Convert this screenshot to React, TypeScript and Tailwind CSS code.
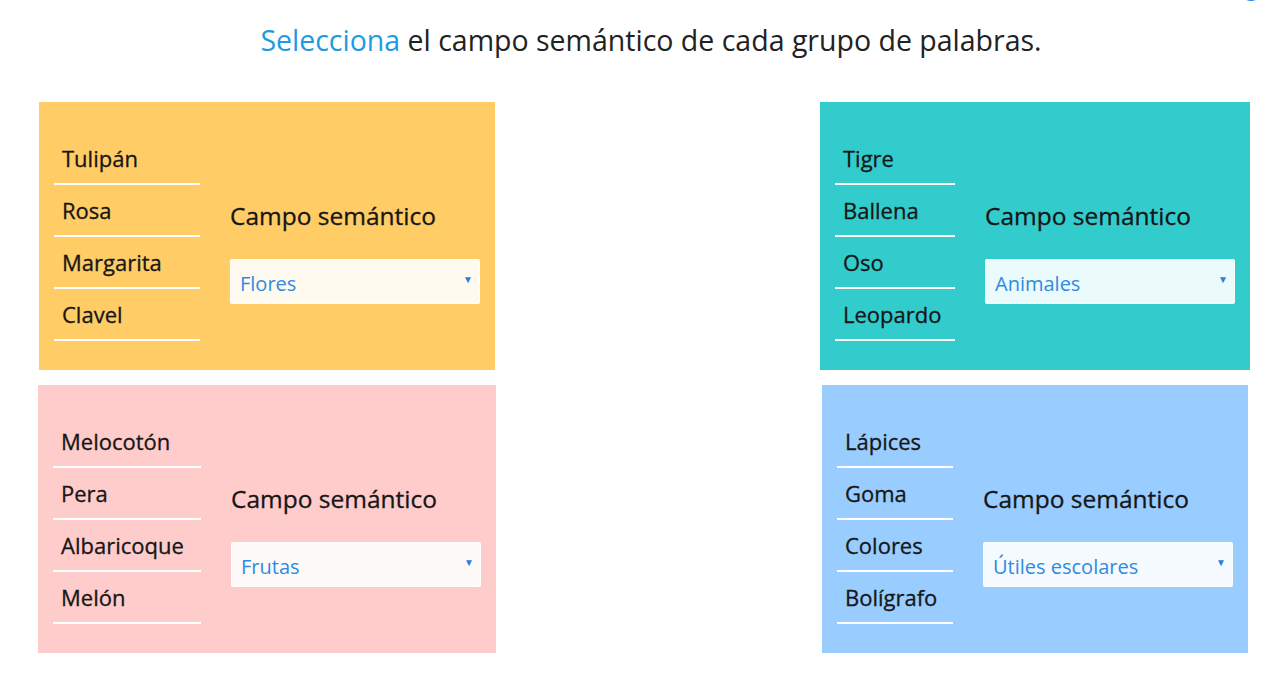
import React from 'react';

interface Group {
  words: string[];
  answer: string;
  bg: string;
  listW: string;
  boxW: string;
}

const groups: Group[] = [
  { words: ['Tulipán', 'Rosa', 'Margarita', 'Clavel'], answer: 'Flores', bg: 'bg-[#ffcc66]', listW: 'w-[146px]', boxW: 'w-[456px]' },
  { words: ['Tigre', 'Ballena', 'Oso', 'Leopardo'], answer: 'Animales', bg: 'bg-[#33cccc]', listW: 'w-[120px]', boxW: 'w-[430px]' },
  { words: ['Melocotón', 'Pera', 'Albaricoque', 'Melón'], answer: 'Frutas', bg: 'bg-[#ffcccc]', listW: 'w-[148px]', boxW: 'w-[458px]' },
  { words: ['Lápices', 'Goma', 'Colores', 'Bolígrafo'], answer: 'Útiles escolares', bg: 'bg-[#99ccff]', listW: 'w-[116px]', boxW: 'w-[426px]' },
];

const GroupCard: React.FC<{ group: Group }> = ({ group }) => (
  <div className={`${group.bg} ${group.boxW} h-[268px] flex items-start pl-[15px] pr-[15px] pt-[31px]`}>
    <ul className={`${group.listW} shrink-0`}>
      {group.words.map((w) => (
        <li key={w} className="h-[52px] border-b-2 border-white flex items-center pl-2 pt-px text-[22px] text-[#161616] [-webkit-text-stroke:0.3px_#161616]">
          {w}
        </li>
      ))}
    </ul>
    <div className="ml-[30px] mt-[66px] flex flex-col">
      <div className="text-[24.5px] text-[#161616] leading-[34px] [-webkit-text-stroke:0.3px_#161616]">Campo semántico</div>
      <div className="mt-[26px] w-[250px] h-[45px] rounded-[2px] border border-white/60 bg-white/90 flex items-center justify-between pl-[9px] pr-[6px]">
        <span className="text-[20px] text-[#2f8ae0] pt-[4px]">{group.answer}</span>
        <span className="text-[10px] text-[#2f7fd8] self-start mt-[12px]">▼</span>
      </div>
    </div>
  </div>
);

export default function App() {
  return (
    <div className="relative min-h-[694px] bg-white font-['Open_Sans',sans-serif]">
      <div className="absolute right-[20px] -top-[21px] w-[22px] h-[22px] rounded-full bg-[#2f8ae0]" />
      <h1 className="pt-[20px] pl-[20px] text-center text-[28.5px] leading-[40px] text-[#222]">
        <span className="text-[#1e9be0]">Selecciona</span> el campo semántico de cada grupo de palabras.
      </h1>
      <div className="mt-[42px] pl-[38px] pr-[32px] flex flex-col gap-[15px]">
        <div className="flex justify-between">
          <div className="pl-px"><GroupCard group={groups[0]} /></div>
          <GroupCard group={groups[1]} />
        </div>
        <div className="flex justify-between">
          <GroupCard group={groups[2]} />
          <div className="pr-[2px]"><GroupCard group={groups[3]} /></div>
        </div>
      </div>
    </div>
  );
}
